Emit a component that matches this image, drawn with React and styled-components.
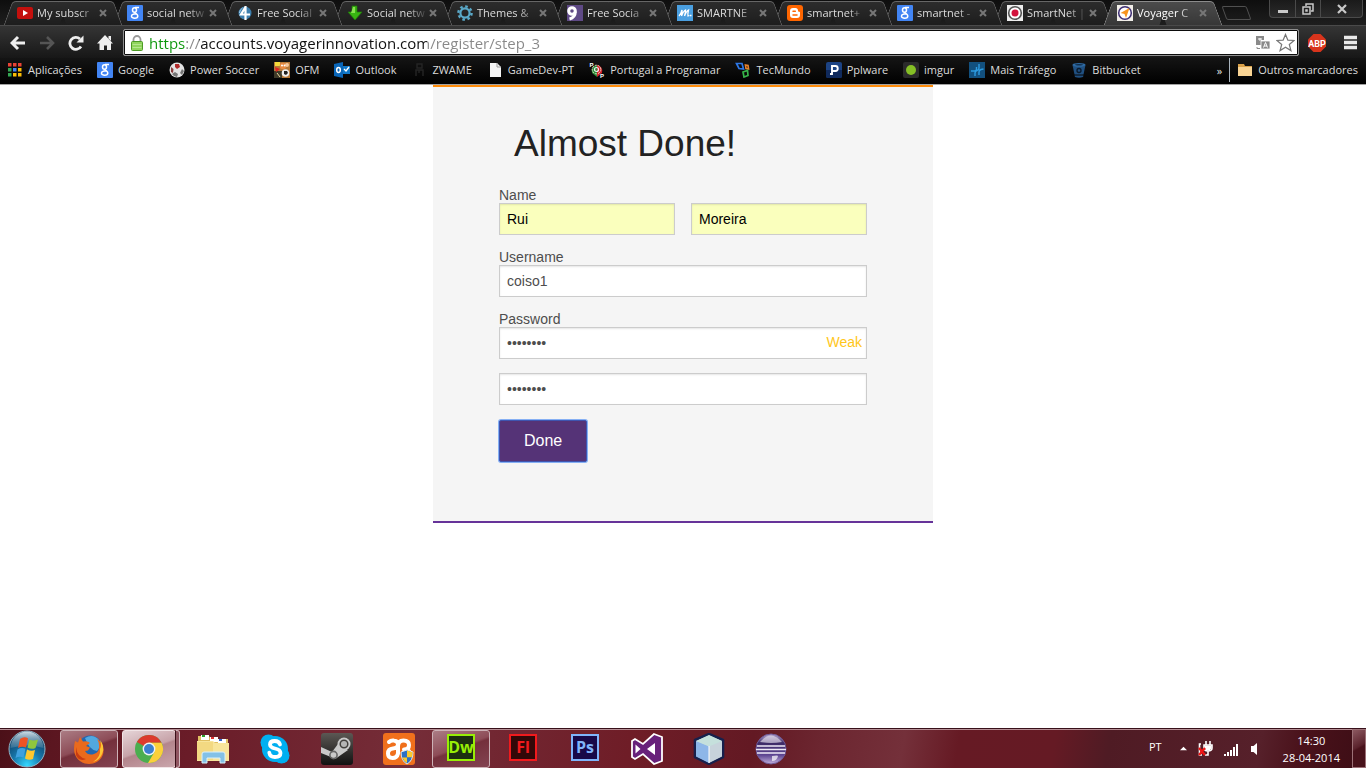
import React from "react";
import styled, { createGlobalStyle, css } from "styled-components";

const UI = `"Open Sans", "Noto Sans", sans-serif`;
const ARIAL = `"Liberation Sans", Arial, sans-serif`;

const GlobalStyle = createGlobalStyle`
  *, *::before, *::after { box-sizing: border-box; }
  body { margin: 0; background: #fff; font-family: ${ARIAL}; }
  button { font: inherit; color: inherit; padding: 0; border: 0; background: none; cursor: pointer; }
  svg { display: block; flex: none; }
`;

const Screen = styled.div`
  display: flex;
  flex-direction: column;
  min-height: 100vh;
`;

/* ---------- browser chrome ---------- */

const Browser = styled.header`
  background: #1b1b1b;
  border-bottom: 1px solid #a3a3a3;
  font-family: ${UI};
  font-size: 11px;
  color: #e6e6e6;
`;

const TabStrip = styled.div`
  display: flex;
  height: 25px;
  padding: 1px 3px 0 8px;
  background: linear-gradient(#0e0e0e, #1e1e1e);
`;

const slope = css`
  content: "";
  position: absolute;
  z-index: -1;
  top: 0;
  bottom: 0;
  width: 51%;
  border-top: 1px solid ${(p) => (p.$active ? "#8b8b8b" : "#666")};
  background: ${(p) =>
    p.$active ? "linear-gradient(#4b4b4b, #373737)" : "linear-gradient(#2c2c2c, #1d1d1d)"};
`;

const Tab = styled.div`
  position: relative;
  z-index: ${(p) => p.$layer};
  isolation: isolate;
  flex: 0 1 110px;
  min-width: 0;
  height: 24px;
  display: flex;
  align-items: center;
  padding: 0 11px 0 9px;
  gap: 4px;
  color: ${(p) => (p.$active ? "#fff" : "#dcdcdc")};

  &::before {
    ${slope}
    left: 0;
    transform: skewX(-20deg);
    border-left: 1px solid ${(p) => (p.$active ? "#8b8b8b" : "#666")};
    border-top-left-radius: 4px;
  }
  &::after {
    ${slope}
    right: 0;
    transform: skewX(20deg);
    border-right: 1px solid ${(p) => (p.$active ? "#8b8b8b" : "#666")};
    border-top-right-radius: 4px;
  }
`;

const TabTitle = styled.button`
  flex: 1;
  min-width: 0;
  white-space: nowrap;
  text-align: left;
  line-height: 16px;
  mask-image: linear-gradient(to right, #000 70%, rgba(0, 0, 0, 0.15));
`;

const CloseTab = styled.button`
  flex: none;
`;

const NewTab = styled.button`
  width: 25px;
  height: 14px;
  margin: 5px 0 0 6px;
  border: 1px solid #505050;
  border-radius: 2px;
  transform: skewX(20deg);
`;

const WindowButtons = styled.div`
  display: flex;
  height: 18px;
  margin: -1px 0 0 auto;
  border: 1px solid #4a4a4a;
  border-top: 0;
  border-radius: 0 0 4px 4px;
  background: linear-gradient(#1a1a1a, #2b2b2b);
`;

const WindowButton = styled.button`
  display: flex;
  align-items: center;
  justify-content: center;
  width: ${(p) => (p.$wide ? 42 : 25)}px;
  & + & { border-left: 1px solid #4a4a4a; }
`;

const Toolbar = styled.div`
  display: flex;
  align-items: center;
  height: 33px;
  padding: 1px 8px 0 10px;
  border-top: 1px solid #4a4a4a;
  background: linear-gradient(#353535, #171717);
`;

const NavButton = styled.button`
  width: 16px;
  height: 18px;
  margin-right: 13px;
  display: flex;
  align-items: center;
  justify-content: center;
`;

const Omnibox = styled.div`
  flex: 1;
  min-width: 0;
  display: flex;
  align-items: center;
  gap: 5px;
  height: 27px;
  margin-left: -3px;
  padding: 0 3px 0 6px;
  background: #fff;
  border: 1px solid #8f8f8f;
  border-radius: 2px;
  box-shadow: 0 0 0 1px #0b0b0b inset;
`;

const UrlInput = styled.input`
  flex: 1;
  min-width: 0;
  height: 24px;
  padding: 0;
  border: 0;
  outline: 0;
  font-family: ${UI};
  font-size: 15px;
  line-height: 24px;
  background: linear-gradient(to right, #0b960b 0 37px, #888 37px 50px, #111 50px 278px, #888 278px);
  background-clip: text;
  -webkit-background-clip: text;
  color: #111;
  -webkit-text-fill-color: transparent;
`;

const BarButton = styled.button`
  flex: none;
  margin-left: ${(p) => p.$gap || 0}px;
`;

const Bookmarks = styled.nav`
  display: flex;
  align-items: center;
  gap: 15px;
  height: 26px;
  padding: 0 8px 2px 7px;
  background: linear-gradient(#141414, #000);
`;

const Bookmark = styled.a`
  display: flex;
  align-items: center;
  gap: 5px;
  flex: none;
  line-height: 16px;
  white-space: nowrap;
  color: #dcdcdc;
  text-decoration: none;
`;

const BookmarkTail = styled.div`
  display: flex;
  align-items: center;
  gap: 7px;
  margin-left: auto;
`;

const Divider = styled.span`
  width: 1px;
  height: 24px;
  background: #a9b4bd;
`;

/* ---------- page ---------- */

const Page = styled.main`
  flex: 1;
`;

const Card = styled.section`
  max-width: 500px;
  margin: 0 auto;
  padding: 35px 66px 59px;
  border-top: 2px solid #ff8c0a;
  border-bottom: 2px solid #663399;
  background: #f5f5f5;
  color: #4d4d4d;
`;

const Title = styled.h1`
  margin: 0 0 21px;
  padding-left: 15px;
  font-size: 37px;
  line-height: 44px;
  font-weight: 400;
  color: #222;
`;

const Form = styled.form`
  display: flex;
  flex-direction: column;
  align-items: stretch;
  gap: 14px;
`;

const Field = styled.div`
  position: relative;
  display: flex;
  flex-direction: column;
`;

const Pair = styled.div`
  display: flex;
  gap: 16px;
`;

const Label = styled.label`
  font-size: 14px;
  line-height: 16px;
`;

const TextInput = styled.input`
  width: 100%;
  min-width: 0;
  height: 32px;
  padding: 0 7px;
  border: 1px solid #ccc;
  border-radius: 0;
  outline: 0;
  background: ${(p) => (p.$filled ? "#faffbd" : "#fff")};
  box-shadow: inset 0 1px 2px rgba(0, 0, 0, 0.1);
  font-family: ${ARIAL};
  font-size: 14px;
  color: ${(p) => (p.$filled ? "#000" : "#4d4d4d")};
`;

const Strength = styled.span`
  position: absolute;
  right: 5px;
  bottom: 9px;
  font-size: 14px;
  line-height: 16px;
  color: #ffc61a;
`;

const Submit = styled.button`
  align-self: flex-start;
  height: 42px;
  margin-top: 1px;
  padding: 0 24px;
  border: 1px solid #3f55b0;
  border-radius: 2px;
  background: #553377;
  box-shadow: 0 0 0 1px #86b0f4;
  font-size: 16px;
  color: #fff;
`;

/* ---------- taskbar ---------- */

const Taskbar = styled.footer`
  display: flex;
  align-items: stretch;
  height: 40px;
  border-top: 1px solid #37101a;
  box-shadow: inset 0 1px 0 #b78f96;
  background: linear-gradient(
    100deg,
    #4b1018 0,
    #5b1620 4%,
    #6a1c28 14%,
    #752d38 30%,
    #712530 38%,
    #6f1d27 46%,
    #631923 55%,
    #6c2630 60%,
    #74303a 66%,
    #661a24 70%,
    #651a24 77%,
    #4f1b24 81%,
    #56202a 92%,
    #4a121b 95%,
    #3c0d15 100%
  );
  font-family: ${UI};
  font-size: 11px;
  color: #fff;
`;

const StartButton = styled.button`
  width: 40px;
  margin: 0 13px 0 7px;
`;

const Tasks = styled.div`
  display: flex;
  gap: 4px;
  flex: 1;
`;

const frames = {
  open: css`
    border-color: #cdb2b7;
    background: linear-gradient(160deg, #ab7c84 0, #8d4c57 45%, #74303c 50%, #834351 100%);
  `,
  active: css`
    border-color: #f1e4e6;
    background: linear-gradient(160deg, #e6d5d8 0, #c7a3a9 48%, #b3858c 52%, #caa6ac 100%);
  `,
};

const Task = styled.button`
  position: relative;
  display: flex;
  align-items: center;
  justify-content: center;
  width: 58px;
  height: 38px;
  margin-top: 1px;
  border: 1px solid transparent;
  border-radius: 3px;
  ${(p) => frames[p.$state]}
  ${(p) =>
    p.$stacked &&
    css`
      width: 54px;
      margin-right: 4px;
      &::after {
        content: "";
        position: absolute;
        top: -1px;
        bottom: -1px;
        right: -5px;
        width: 5px;
        border: 1px solid #d5bcc0;
        border-left-color: #3a1018;
        border-radius: 0 3px 3px 0;
        background: #8f5560;
      }
    `}
`;

const AdobeIcon = styled.span`
  width: 28px;
  height: 27px;
  margin-bottom: 4px;
  border: 2px solid ${(p) => p.$tint};
  background: ${(p) => p.$bg};
  color: ${(p) => p.$tint};
  font-family: "Open Sans", sans-serif;
  font-size: 16px;
  font-weight: 700;
  line-height: 23px;
  display: flex;
  justify-content: center;
`;

const Tray = styled.div`
  display: flex;
  align-items: center;
`;

const Language = styled.button`
  margin: 0 18px 4px 0;
`;

const TrayIcons = styled.div`
  display: flex;
  align-items: center;
  gap: 10px;
  margin-right: 18px;
`;

const Clock = styled.time`
  display: block;
  margin-right: 12px;
  text-align: center;
  line-height: 17px;
`;

const ShowDesktop = styled.button`
  align-self: stretch;
  width: 14px;
  border: 1px solid #9c7177;
  background: linear-gradient(150deg, #8b5860, #5a222c 45%, #48121b 50%);
`;

/* ---------- icons ---------- */

const Svg = ({ s = 16, box = 16, children }) => (
  <svg width={s} height={s} viewBox={`0 0 ${box} ${box}`} aria-hidden="true">{children}</svg>
);

const glyph = (x, y, size, fill, text, weight = 700, family = "Liberation Sans, sans-serif") => (
  <text x={x} y={y} fontSize={size} fill={fill} fontWeight={weight} fontFamily={family} textAnchor="middle">{text}</text>
);

const YouTube = () => (
  <Svg><rect y="2" width="16" height="12" rx="2" fill="#c4100d" /><path d="M6 5v6l5-3z" fill="#fff" /></Svg>
);
const GoogleG = () => (
  <Svg>
    <rect width="16" height="16" rx="1" fill="#4285f4" />
    <g fill="none" stroke="#fff" strokeWidth="1.5">
      <ellipse cx="7.500" cy="5" rx="2" ry="2.300" />
      <path d="M8 2.600h4M8.500 7.200c-1.500 1 2.300 1.700 2.300 3.700 0 3-6.300 3-6.300.3 0-1.900 2-2.300 4.700-2.400" />
    </g>
  </Svg>
);
const Four = () => (
  <Svg>
    <circle cx="8" cy="8" r="6.500" fill="#3d7fae" />
    <path d="M8.500 1v14M8.500 2L4 9.500h9" fill="none" stroke="#fff" strokeWidth="2.200" />
    <path d="M2.500 8a6 6 0 0 1 3-5" stroke="#a5cde6" fill="none" />
  </Svg>
);
const GreenDown = () => (
  <Svg>
    <path d="M5 1h5v6h5l-7 8-7-8h4z" fill="#38b512" stroke="#1f7a08" strokeWidth=".7" />
    <path d="M6 2h2v6H4z" fill="#86e24f" />
  </Svg>
);
const Gear = () => (
  <Svg>
    <circle cx="8" cy="8" r="4.600" fill="none" stroke="#5aa9c9" strokeWidth="2.200" />
    <circle cx="8" cy="8" r="6.600" fill="none" stroke="#5aa9c9" strokeWidth="2.400" strokeDasharray="2.600 2.580" />
  </Svg>
);
const Nine = () => (
  <Svg>
    <rect width="16" height="16" fill="#5f4a86" />
    <circle cx="5" cy="6" r="3.300" fill="none" stroke="#fff" strokeWidth="3" />
    <path d="M8.300 6.500c0 4-2 6.500-5.800 7.500" fill="none" stroke="#fff" strokeWidth="3" />
  </Svg>
);
const ScriptM = () => (
  <Svg><rect width="16" height="16" fill="#4a9fe0" />
    <path d="M2 11q2-2 3-6 .5 3-.5 6 2-5 4-6 0 3-1 6 2-5 4-6-1 4-.5 6l1.500-.5" fill="none" stroke="#fff" strokeWidth="1.300" />
    <path d="M13 10.500h1.500" stroke="#fff" strokeWidth="1.500" />
  </Svg>
);
const Blogger = () => (
  <Svg>
    <rect width="16" height="16" rx="3" fill="#f60" />
    <path d="M6 3h2.500C10 3 11 4 11 5.500c0 1 .4 1.300 1.300 1.300.5 0 .7.300.7.700V10a3 3 0 0 1-3 3H6a3 3 0 0 1-3-3V6a3 3 0 0 1 3-3z" fill="#fff" />
    <path d="M6 6.200h2.300M6 9.900h4" stroke="#f60" strokeWidth="1.500" strokeLinecap="round" />
  </Svg>
);
const Target = () => (
  <Svg>
    <rect width="16" height="16" fill="#eee" />
    <circle cx="8" cy="8" r="6.300" fill="#fff" stroke="#555" strokeWidth="1.600" />
    <circle cx="8" cy="8" r="3.500" fill="#d3123c" />
  </Svg>
);
const Voyager = () => (
  <Svg>
    <rect width="16" height="16" fill="#f1eee9" />
    <circle cx="8" cy="8" r="6.300" fill="#fff" stroke="#3d2d72" strokeWidth="1.500" />
    <path d="M12.500 3L9 13 7.500 9 3.500 8z" fill="#f7941d" />
  </Svg>
);
const Apps = () => (
  <Svg>
    {["#ea4335", "#ea4335", "#ea4335", "#34a853", "#4285f4", "#fbbc05", "#34a853", "#fbbc05", "#fbbc05"].map((c, i) => (
      <rect key={i} x={1 + (i % 3) * 5} y={1 + Math.floor(i / 3) * 5} width="3.500" height="3.500" fill={c} />
    ))}
  </Svg>
);
const Soccer = () => (
  <Svg>
    <circle cx="8" cy="8" r="7.500" fill="#e4e4e4" />
    <path d="M6 2h4l1 3-3 2-2-2z" fill="#b02a2a" />
    <path d="M2 5l2.500 2L4 11l-2-1z" fill="#8a3a3a" />
    <path d="M3 12l3-2 3 2-1 3-3-1zM13 7l2 2-2 4-2-2z" fill="#777" />
  </Svg>
);
const Ofm = () => (
  <Svg>
    <rect width="16" height="16" fill="#b57838" />
    <path d="M0 9h8v7H0z" fill="#3f3a28" /><path d="M1 0h5v4H1z" fill="#f3d93a" />
    <circle cx="9" cy="4" r="3.300" fill="#e78a42" /><circle cx="13" cy="3" r="2" fill="#f6c79a" />
    <circle cx="8" cy="3.500" r="1" fill="#fff" /><circle cx="10.500" cy="3.500" r="1" fill="#fff" />
    <circle cx="11.500" cy="11" r="3.800" fill="#eee" /><path d="M10 9h3l1 2-2 2-2-1z" fill="#222" />
    <path d="M1 5l5 2-4 3z" fill="#d22" /><path d="M3 11l3 4" stroke="#e8d8a0" />
  </Svg>
);
const Outlook = () => (
  <Svg>
    <path d="M8 4h8v8H8z" fill="#1178c8" /><path d="M10 7l2 2 3-4" fill="none" stroke="#fff" strokeWidth="1.300" />
    <path d="M0 2l9-2v16l-9-2z" fill="#0a66b8" />
    <ellipse cx="4.500" cy="8" rx="1.800" ry="2.400" fill="none" stroke="#fff" strokeWidth="1.500" />
  </Svg>
);
const Zwame = () => (
  <Svg><path d="M6 2h5v4H6zM5 14V8h7v6M8 8v3" fill="none" stroke="#252525" strokeWidth="1.400" /></Svg>
);
const Doc = () => (
  <Svg><path d="M3 1h7l4 4v10H3z" fill="#f4f4f4" /><path d="M10 1v4h4" fill="none" stroke="#999" /></Svg>
);
const Portugal = () => (
  <Svg>
    <path d="M8 3a6 6 0 0 0-5 8l5 4z" fill="#2b8f3a" /><path d="M8 3a6 6 0 0 1 5 8l-5 4z" fill="#d4202a" />
    <circle cx="7.500" cy="7.500" r="4.300" fill="none" stroke="#e9dfc8" strokeWidth="1" strokeDasharray="2 1" />
    <circle cx="7.500" cy="7.500" r="2" fill="none" stroke="#eee" strokeWidth="1.200" />
    {glyph(2.5, 5, 6, "#fff", "P")}{glyph(13, 16, 6, "#fff", "P")}
  </Svg>
);
const TecMundo = () => (
  <Svg><g fill="none" strokeWidth="1.700">
    <path d="M1.500 1.500h5.500l1.500 5.500L4 6.500z" stroke="#2d77e6" />
    <path d="M10.500 3l2.500.5.500 3.500-2.500-.5z" stroke="#e6812d" />
    <path d="M8 10l4.500-1.500.5 5-4 1.500z" stroke="#37b54a" />
  </g></Svg>
);
const Pplware = () => (
  <Svg><rect width="16" height="16" rx="2" fill="#1c4384" /><path d="M0 8h16v6a2 2 0 0 1-2 2H2a2 2 0 0 1-2-2z" fill="#102a5c" />
    <path d="M4 12h2V4h3.500c3 0 3 5 0 5H6" fill="none" stroke="#fff" strokeWidth="1.900" /></Svg>
);
const Imgur = () => (
  <Svg><rect width="16" height="16" rx="2" fill="#2b2b2b" /><circle cx="8" cy="8" r="5" fill="#85bf25" /></Svg>
);
const Trafego = () => (
  <Svg><rect width="16" height="16" fill="#12507e" />
    <path d="M2 9h3.500q2 0 2-2V5M6 14v-3q0-2 2-2.500 2-.5 2-2.500V2M10 13v-3q0-2 2-2.500l2.500-.5" stroke="#2d9be0" strokeWidth="1.400" fill="none" /></Svg>
);
const Bitbucket = () => (
  <Svg><path d="M1.500 3l2 9.500h9l2-9.500zM3.500 13.500h9l-.5 1.500q-4 1.500-8 0z" fill="#205081" />
    <ellipse cx="8" cy="2.800" rx="6.500" ry="1.900" fill="#2e6aa3" /><ellipse cx="8" cy="2.800" rx="4" ry=".8" fill="#102d4b" />
    <circle cx="8" cy="8.500" r="2" fill="none" stroke="#0b1c2e" strokeWidth="1.400" /></Svg>
);
const Folder = () => (
  <Svg><path d="M1 2h6l1 2h7v9.500H1z" fill="#d9a14a" /><path d="M1 5h14v9H1z" fill="#f9d494" /></Svg>
);
const Close = () => (
  <Svg s={8} box={8}><path d="M1 1l6 6M7 1L1 7" stroke="#777" strokeWidth="2" /></Svg>
);

const StartOrb = () => (
  <svg width="40" height="38" viewBox="0 0 40 38" aria-hidden="true">
    <defs>
      <radialGradient id="orb" cx=".5" cy=".95" r=".9">
        <stop offset="0" stopColor="#35d8ff" /><stop offset=".45" stopColor="#1878ac" /><stop offset="1" stopColor="#0b3459" />
      </radialGradient>
      <linearGradient id="orbGloss" x2="0" y2="1"><stop stopColor="#e4f1f7" stopOpacity=".9" /><stop offset="1" stopColor="#7fa8be" stopOpacity=".3" /></linearGradient>
    </defs>
    <circle cx="20" cy="19" r="18" fill="url(#orb)" stroke="#93b5c6" />
    <path d="M3.500 18a16.500 16.500 0 0 1 33 0q-16-5-33 0z" fill="url(#orbGloss)" />
    <path d="M13 9q4-3 8-.8L19 17.500q-4-1.800-8 .6z" fill="#ee5224" />
    <path d="M22.500 9.500q4 2 8.500 0l-2.500 8.500q-4 2-8-.6z" fill="#8fc63d" />
    <path d="M10.500 19.500q3.800-2.400 8-.8l-2 8.800q-4-2-8 .6z" fill="#3fa0df" />
    <path d="M20 19.500q4 2.200 8 .6L26 29q-4 1.800-8-.6z" fill="#ffc72e" />
  </svg>
);
const Firefox = () => (
  <Svg s={32} box={32}>
    <circle cx="17" cy="14.500" r="12" fill="#2367b0" /><path d="M12 5q8-5 14 2 3 6-2 11-8-1-12-13z" fill="#51a8e0" />
    <path d="M2 8l3 1.500L7 4l3 4.500q5-1 7 1.500l-4 3 4 1.500-2 3-3 .5q3 5 9 3 6-2 5-9-.5-4-2-6 6 3.500 6.500 11C31 25 24 31 16 31 7 31 1 24 1 16q0-4 1-8z" fill="#ea6a1c" />
    <path d="M27 7q5 6 2.500 13Q27 27 20 29q8-5 7-13 2-4 0-9z" fill="#fcc534" />
    <path d="M3 14q1 10 10 12-7 3-10-4z" fill="#c93b12" />
  </Svg>
);
const Chrome = () => (
  <Svg s={30} box={30}>
    <circle cx="15" cy="15" r="14" fill="#4bae4f" />
    <path d="M15 15L2.900 8A14 14 0 0 1 27.500 8.700H15z" fill="#dc3a2d" />
    <path d="M27.500 8.700A14 14 0 0 1 14 29l6.500-11L15 8.700z" fill="#fbd03b" />
    <circle cx="15" cy="15" r="6.400" fill="#eef2f5" /><circle cx="15" cy="15" r="5" fill="#3b7fd0" />
  </Svg>
);
const Explorer = () => (
  <Svg s={34} box={34}>
    <path d="M2 4h11l2 3h17v21H2z" fill="#e0bf62" />
    <path d="M5 3h8v5H5zM14 5h8v5h-8zM22 7h8v5h-8z" fill="#fff" />
    <path d="M6 3h3v2H6z" fill="#2ba02c" /><path d="M15 5h3v2h-3z" fill="#d33" /><path d="M23 7h3v2h-3z" fill="#36c" />
    <path d="M1 9h16l2 2h14v18H1z" fill="#f8e59b" /><path d="M1 10h16v18H1z" fill="#f3d982" />
    <path d="M6 31v-9q0-2 2-2h19q2 0 2 2v9h-5v-5H11v5z" fill="#83c1e6" stroke="#d9f1fb" />
  </Svg>
);
const Skype = () => (
  <Svg s={32} box={32}>
    <circle cx="16" cy="16" r="13" fill="#00aff0" /><circle cx="9.500" cy="9.500" r="8" fill="#00aff0" /><circle cx="22.500" cy="22.500" r="8" fill="#00aff0" />
    <path d="M21 11.500q-1-3.500-5.300-3.500-4.700 0-4.700 3.500 0 2.800 5 4 5.500 1.200 5.500 4.500 0 4-5.500 4-5 0-5.700-4.300" fill="none" stroke="#fff" strokeWidth="3.800" strokeLinecap="round" />
  </Svg>
);
const Steam = () => (
  <Svg s={32} box={32}>
    <defs><linearGradient id="steam" x2="0" y2="1"><stop stopColor="#5c5854" /><stop offset="1" stopColor="#111" /></linearGradient></defs>
    <rect width="32" height="32" rx="3" fill="url(#steam)" />
    <path d="M0 14l11 5 6-8 10 6-10 7q-4 4-7 0L0 20z" fill="#c9c9c9" />
    <circle cx="23" cy="11" r="6.500" fill="#c9c9c9" /><circle cx="23" cy="11" r="3.800" fill="#b5b5b5" stroke="#44413e" strokeWidth="1.500" />
    <circle cx="12.500" cy="22" r="3.600" fill="none" stroke="#666" strokeWidth="1.600" />
  </Svg>
);
const Xampp = () => (
  <Svg s={32} box={32}>
    <rect width="32" height="32" rx="3" fill="#f0701c" />
    <path d="M6 9q2-2 5-1.500 4 .5 4 4t-5 4q-5 .5-5 5t4.500 4.500 5.500-4.500v-7q0-6 5.500-6t5.500 4.500-5 4.500q6 0 6 5" fill="none" stroke="#fff" strokeWidth="4" strokeLinecap="round" strokeLinejoin="round" />
    <path d="M18 19l6-2 6 2q0 9-6 12-6-3-6-12z" fill="#2c6fc4" stroke="#dfe8f0" />
    <path d="M24 17.500l5.500 1.800q0 3-.7 5H24zM24 24.500V30q-3.500-2-4.800-5.500z" fill="#fbc92b" />
  </Svg>
);
const VisualStudio = () => (
  <Svg s={32} box={32}>
    <path d="M23 1l8 3v24l-8 3-11-10-8 5-3-2V8l3-2 8 5z" fill="#68217a" stroke="#fff" strokeWidth="1.800" />
    <path d="M24 10v12l-8-6zM4.500 11.500v9l5-4.500z" fill="#fff" />
  </Svg>
);
const Cube = () => (
  <Svg s={32} box={32}>
    <path d="M16 1l14 6v17l-14 7L2 24V7z" fill="#b8d8e0" stroke="#17204c" strokeWidth="2.600" strokeLinejoin="round" />
    <path d="M3 8l13 5v17L3 23.500z" fill="#8db6e8" /><path d="M16 13l13-5v15.500L16 30z" fill="#c7d3db" />
    <path d="M3 8l13-6 13 6-13 5.500z" fill="#c5e0dc" /><path d="M16 13v17" stroke="#fff" />
  </Svg>
);
const Eclipse = () => (
  <Svg s={32} box={32}>
    <defs><linearGradient id="ecl" x2="0" y2="1"><stop stopColor="#b7a7d2" /><stop offset=".3" stopColor="#3d2a66" /><stop offset=".7" stopColor="#5d4592" /><stop offset="1" stopColor="#c3b2de" /></linearGradient></defs>
    <circle cx="16" cy="16" r="15" fill="url(#ecl)" stroke="#6f5a98" />
    <path d="M2 13h28M1 16.500h30M2 20h28" stroke="#efeaf7" strokeWidth="1.400" />
    <path d="M5 9q11-13 22 0-11 2-22 0z" fill="#f1ecf7" opacity=".6" />
    <path d="M17 23q6-1 6 0-1 5-6 5z" fill="#fff" opacity=".7" />
  </Svg>
);

/* ---------- data ---------- */

const tabs = [
  ["My subscr", YouTube],
  ["social netw", GoogleG],
  ["Free Social", Four],
  ["Social netw", GreenDown],
  ["Themes &", Gear],
  ["Free Socia", Nine],
  ["SMARTNE", ScriptM],
  ["smartnet+", Blogger],
  ["smartnet -", GoogleG],
  ["SmartNet |", Target],
  ["Voyager C", Voyager],
];

const bookmarks = [
  ["Aplicações", Apps],
  ["Google", GoogleG],
  ["Power Soccer", Soccer],
  ["OFM", Ofm],
  ["Outlook", Outlook],
  ["ZWAME", Zwame],
  ["GameDev-PT", Doc],
  ["Portugal a Programar", Portugal],
  ["TecMundo", TecMundo],
  ["Pplware", Pplware],
  ["imgur", Imgur],
  ["Mais Tráfego", Trafego],
  ["Bitbucket", Bitbucket],
];

const tasks = [
  { name: "Firefox", icon: <Firefox />, state: "open" },
  { name: "Chrome", icon: <Chrome />, state: "active", stacked: true },
  { name: "Explorer", icon: <Explorer /> },
  { name: "Skype", icon: <Skype /> },
  { name: "Steam", icon: <Steam /> },
  { name: "XAMPP", icon: <Xampp /> },
  { name: "Dreamweaver", icon: <AdobeIcon $tint="#98ee06" $bg="#1d2f10">Dw</AdobeIcon>, state: "open" },
  { name: "Flash", icon: <AdobeIcon $tint="#f11a1d" $bg="#330808">Fl</AdobeIcon> },
  { name: "Photoshop", icon: <AdobeIcon $tint="#80b5fb" $bg="#180949">Ps</AdobeIcon> },
  { name: "Visual Studio", icon: <VisualStudio /> },
  { name: "NetBeans", icon: <Cube /> },
  { name: "Eclipse", icon: <Eclipse /> },
];

/* ---------- app ---------- */

function BrowserChrome() {
  return (
    <Browser>
      <TabStrip>
        {tabs.map(([title, Icon], i) => {
          const active = i === tabs.length - 1;
          return (
            <Tab key={i} $active={active} $layer={active ? 20 : tabs.length - i}>
              <Icon />
              <TabTitle type="button">{title}</TabTitle>
              <CloseTab type="button" aria-label="Close tab"><Close /></CloseTab>
            </Tab>
          );
        })}
        <NewTab type="button" aria-label="New tab" />
        <WindowButtons>
          <WindowButton type="button" aria-label="Minimize">
            <Svg s={12} box={12}><path d="M1 7h10v3H1z" fill="#c9c9c9" /></Svg>
          </WindowButton>
          <WindowButton type="button" aria-label="Restore">
            <Svg s={12} box={12}><path d="M4 3V1h7v7H9M1 4h7v7H1zM4 7h1v1H4z" fill="none" stroke="#c9c9c9" strokeWidth="1.500" /></Svg>
          </WindowButton>
          <WindowButton type="button" $wide aria-label="Close">
            <Svg s={10} box={10}><path d="M1 1l8 8M9 1L1 9" stroke="#c9c9c9" strokeWidth="2.200" /></Svg>
          </WindowButton>
        </WindowButtons>
      </TabStrip>

      <Toolbar>
        <NavButton type="button" aria-label="Back">
          <Svg><path d="M15 8H3M8 2L2 8l6 6" fill="none" stroke="#eee" strokeWidth="3" /></Svg>
        </NavButton>
        <NavButton type="button" aria-label="Forward">
          <Svg><path d="M1 8h12M8 2l6 6-6 6" fill="none" stroke="#555" strokeWidth="2.600" /></Svg>
        </NavButton>
        <NavButton type="button" aria-label="Reload">
          <Svg><path d="M13 11.500A6 6 0 1 1 12 4" fill="none" stroke="#eee" strokeWidth="2.800" /><path d="M15.500.5v7h-7z" fill="#eee" /></Svg>
        </NavButton>
        <NavButton type="button" aria-label="Home">
          <Svg><path d="M8 0l8 8.500h-2V15h-4v-4.500H7V15H2.500V8.500H0z" fill="#eee" /><path d="M11.500 1h2.500v5l-2.500-2.500z" fill="#eee" /></Svg>
        </NavButton>
        <Omnibox>
          <svg width="14" height="16" viewBox="0 0 14 16" aria-hidden="true">
            <path d="M3.500 8V4.500a3.500 3.500 0 0 1 7 0V8" fill="none" stroke="#999" strokeWidth="1.800" />
            <rect x="1.500" y="6.500" width="11" height="9" rx="1" fill="#8fd45c" stroke="#4c9a25" />
            <path d="M2.500 9.500h9M2.500 12.500h9" stroke="#b5e68f" />
          </svg>
          <UrlInput
            aria-label="Address"
            spellCheck={false}
            defaultValue="https://accounts.voyagerinnovation.com/register/step_3"
          />
          <BarButton type="button" aria-label="Translate">
            <Svg>
              <path d="M1 1h8v4H6v5H1z" fill="#8a8a8a" /><path d="M6 6h9v8H6z" fill="#8a8a8a" stroke="#fff" strokeWidth=".8" />
              <path d="M3 4h4M5 3v3M8.500 12.500l2-5 2 5M9 11h3" stroke="#fff" fill="none" />
              <path d="M2 12v1.500h3" fill="none" stroke="#8a8a8a" />
            </Svg>
          </BarButton>
          <BarButton type="button" aria-label="Bookmark this page">
            <Svg s={19} box={20}><path d="M10 1.500l2.500 6 6.500.4-5 4.200 1.700 6.400L10 15l-5.700 3.500L6 12.100 1 7.900l6.500-.4z" fill="#fff" stroke="#777" strokeWidth="1.300" /></Svg>
          </BarButton>
        </Omnibox>
        <BarButton type="button" $gap={9} aria-label="Adblock Plus">
          <Svg s={18} box={18}>
            <path d="M5.500 0h7L18 5.500v7L12.500 18h-7L0 12.500v-7z" fill="#d8341c" />
            {glyph(9, 12.5, 9, "#fff", "ABP", 700, "Roboto, sans-serif")}
          </Svg>
        </BarButton>
        <BarButton type="button" $gap={17} aria-label="Menu">
          <Svg s={15} box={15}><path d="M1 2.500h13M1 7.500h13M1 12.500h13" stroke="#e9e9e9" strokeWidth="3.400" /></Svg>
        </BarButton>
      </Toolbar>

      <Bookmarks aria-label="Bookmarks">
        {bookmarks.map(([name, Icon]) => (
          <Bookmark key={name} href="#"><Icon />{name}</Bookmark>
        ))}
        <BookmarkTail>
          <button type="button">»</button>
          <Divider />
          <Bookmark href="#"><Folder />Outros marcadores</Bookmark>
        </BookmarkTail>
      </Bookmarks>
    </Browser>
  );
}

function RegisterCard() {
  return (
    <Card>
      <Title>Almost Done!</Title>
      <Form onSubmit={(e) => e.preventDefault()}>
        <Field>
          <Label htmlFor="first">Name</Label>
          <Pair>
            <TextInput id="first" $filled defaultValue="Rui" />
            <TextInput aria-label="Last name" $filled defaultValue="Moreira" />
          </Pair>
        </Field>
        <Field>
          <Label htmlFor="username">Username</Label>
          <TextInput id="username" defaultValue="coiso1" />
        </Field>
        <Field>
          <Label htmlFor="password">Password</Label>
          <TextInput id="password" type="password" defaultValue="abcd1234" />
          <Strength>Weak</Strength>
        </Field>
        <TextInput type="password" aria-label="Confirm password" defaultValue="abcd1234" />
        <Submit type="submit">Done</Submit>
      </Form>
    </Card>
  );
}

function DesktopTaskbar() {
  return (
    <Taskbar>
      <StartButton type="button" aria-label="Start"><StartOrb /></StartButton>
      <Tasks>
        {tasks.map((t) => (
          <Task key={t.name} type="button" aria-label={t.name} $state={t.state} $stacked={t.stacked}>{t.icon}</Task>
        ))}
      </Tasks>
      <Tray>
        <Language type="button">PT</Language>
        <TrayIcons>
          <Svg s={7} box={8}><path d="M0 6l4-4 4 4z" fill="#fff" /></Svg>
          <Svg>
            <path d="M4 3H2.500v11H5M9 0v4M13 0v4M7 4h8v3q0 3-4 3t-4-3zM11 10v4H8" fill="none" stroke="#fff" strokeWidth="1.600" />
            <path d="M7.500 4.500h7V7q-1 2.500-3.500 2.500T7.500 7z" fill="#fff" />
            <path d="M2 7l6 7M8 7l-6 7" stroke="#f01414" strokeWidth="2.200" />
          </Svg>
          <Svg><path d="M1 13h2v2H1zM4 11h2v4H4zM7 9h2v6H7zM10 6h2v9h-2zM13 3h2v12h-2z" fill="#fff" /></Svg>
          <Svg><path d="M2 5h2.500L8 2v12l-3.500-3H2z" fill="#fff" /></Svg>
        </TrayIcons>
        <Clock>14:30<br />28-04-2014</Clock>
        <ShowDesktop type="button" aria-label="Show desktop" />
      </Tray>
    </Taskbar>
  );
}

export default function App() {
  return (
    <>
      <GlobalStyle />
      <Screen>
        <BrowserChrome />
        <Page><RegisterCard /></Page>
        <DesktopTaskbar />
      </Screen>
    </>
  );
}
